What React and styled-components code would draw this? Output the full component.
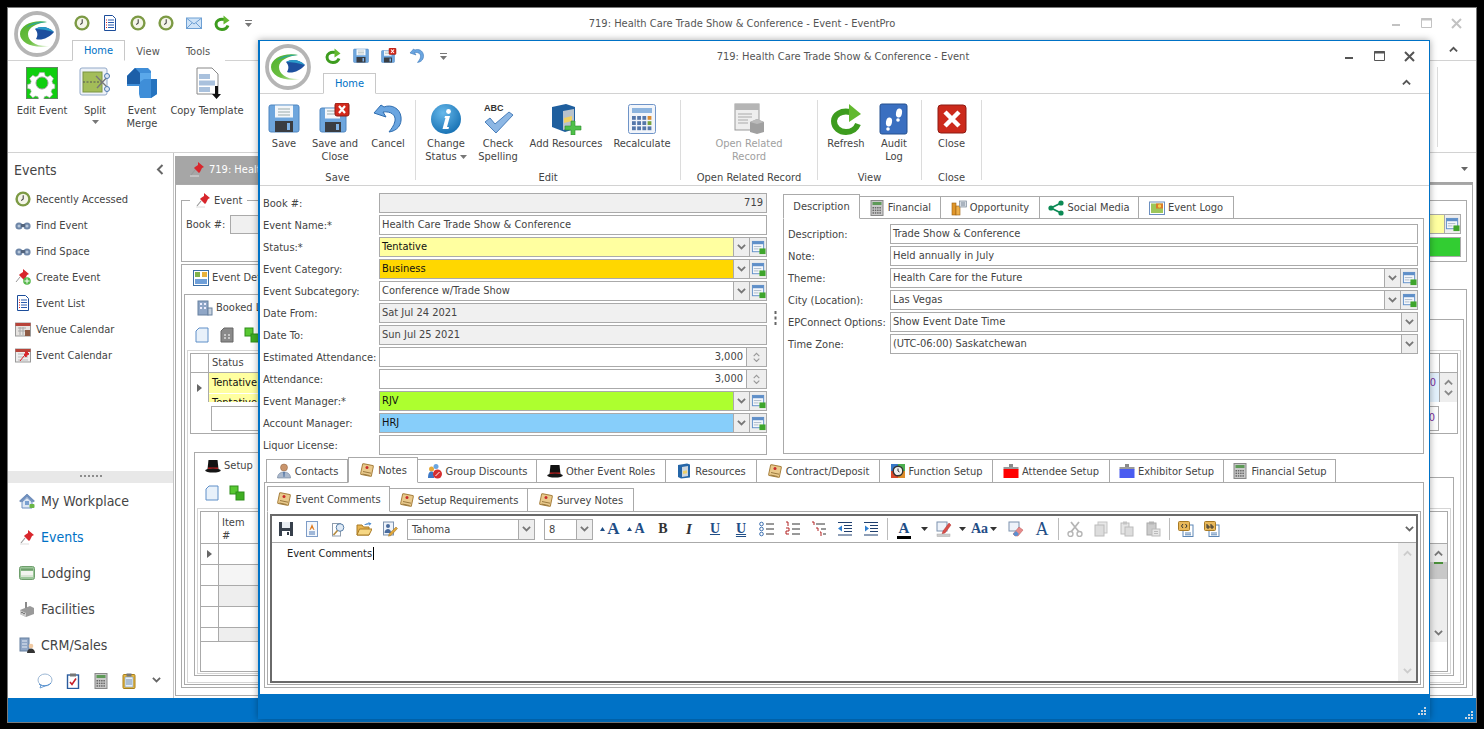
import React from 'react'
import styled, { createGlobalStyle } from 'styled-components'

const GlobalStyle = createGlobalStyle`
  html, body { margin: 0; padding: 0; background: #000; }
  * { box-sizing: border-box; }
  body {
    font-family: "DejaVu Sans Condensed", "DejaVu Sans", sans-serif;
    font-size: 11px;
    color: #444;
  }
`

const Glyph = styled.svg`
  display: block;
  flex-shrink: 0;
`
const icon = (vb, body) => ({ s = vb }) => (
  <Glyph width={s} height={s} viewBox={`0 0 ${vb} ${vb}`}>{body}</Glyph>
)

// ---------- icons ----------
const LogoMark = icon(46, <>
  <defs>
    <linearGradient id="logoG" x1="0" y1="0" x2="1" y2="1">
      <stop offset="0" stopColor="#4fb02c" />
      <stop offset=".6" stopColor="#6dc043" />
      <stop offset="1" stopColor="#d9efc9" />
    </linearGradient>
  </defs>
  <circle cx="23" cy="23" r="21" fill="#fff" stroke="#b5b5b5" strokeWidth="3.800" />
  <path d="M33 11C20 8 6 14 6 23c0 9 14 15 29 12-13 1-21-5-21-12 0-6 8-11 19-12z" fill="url(#logoG)" />
  <path d="M33 11c-9-1-17 1-21 6 4-3 12-5 21-6z" fill="#2aa59a" />
  <path d="M21 18c5-3 13-3 19 3-5 6-13 9-18 7 2-3 2-7-1-10z" fill="#1d4f9e" />
  <path d="M21 18c5-3 13-3 19 3-7-2-13-3-19-3z" fill="#2a9bc9" />
</>)
const Clock = icon(16, <>
  <circle cx="8" cy="8" r="7.600" fill="#7c9a44" />
  <circle cx="8" cy="8" r="5.200" fill="#f4f5e8" />
  <path d="M8.200 4.200V8L6.200 9.600" fill="none" stroke="#444" strokeWidth="1.100" />
</>)
const DocList = icon(16, <>
  <path d="M2.500.5h8l3 3v12h-11z" fill="#fff" stroke="#1c4d9a" />
  <path d="M4 5h1M4 7.500h1M4 10h1M4 12.500h1" stroke="#d22" />
  <path d="M6 5h6M6 7.500h6M6 10h6M6 12.500h6" stroke="#2a5db0" />
</>)
const Mail = icon(16, <>
  <rect x=".5" y="3" width="15" height="10.500" fill="#cfe3f7" stroke="#6d9fd3" />
  <path d="M1 3.500l7 5.500 7-5.500M1 13l5-5M15 13l-5-5" fill="none" stroke="#6d9fd3" />
</>)
const Refresh = icon(32, <>
  <path d="M20 9C11 7 4 12 4 18c0 7 6 11 12 11 6 0 10-3 12-8" fill="none" stroke="#3d9c1e" strokeWidth="6" />
  <path d="M19 1l12 10-12 8z" fill="#62b92f" />
</>)
const Save = icon(32, <>
  <rect x="1" y="2" width="30" height="27" rx="2" fill="#6ea6dd" stroke="#4f86c0" />
  <rect x="7" y="2.500" width="18" height="12" fill="#f4f7fa" />
  <path d="M10 6h12M10 9h12M10 12h12" stroke="#9aa" />
  <rect x="7" y="18" width="18" height="11" fill="#3a3d42" />
  <rect x="19" y="20" width="3" height="7" fill="#7fb2e5" />
</>)
const SaveClose = icon(32, <>
  <rect x="1" y="5" width="26" height="24" rx="2" fill="#6ea6dd" stroke="#4f86c0" />
  <rect x="6" y="5.500" width="15" height="10" fill="#f4f7fa" />
  <path d="M8 8h10M8 11h10" stroke="#9aa" />
  <rect x="6" y="19" width="16" height="10" fill="#3a3d42" />
  <rect x="17" y="21" width="3" height="6" fill="#7fb2e5" />
  <rect x="16" y="0" width="14" height="13" rx="2" fill="#d3291c" stroke="#8d1a12" />
  <path d="M20 3l6 7M26 3l-6 7" stroke="#fff" strokeWidth="2.200" />
</>)
const Undo = icon(32, <>
  <path d="M9 2L2 10l12 4-3-5c8-1 13 3 12 9-1 5-4 8-6 11 8-1 13-7 12-15C28 5 19 1 12 4z" fill="#6aa5e0" stroke="#2f6db0" />
</>)
const Info = icon(32, <>
  <defs><radialGradient id="infoG" cx=".4" cy=".3" r=".8"><stop offset="0" stopColor="#66b8ea" /><stop offset="1" stopColor="#0f6aae" /></radialGradient></defs>
  <circle cx="16" cy="16" r="15" fill="url(#infoG)" />
  <circle cx="18.500" cy="8.500" r="2.400" fill="#fff" />
  <path d="M15 13h5l-3 11h2l-.5 2h-6l3-11h-1z" fill="#fff" />
</>)
const Spell = icon(32, <>
  <text x="2" y="8" fontFamily="Liberation Sans, sans-serif" fontWeight="700" fontSize="9" fill="#333">ABC</text>
  <path d="M3 19l5-4 5 6L27 9l4 3-17 18z" fill="#8db7e4" stroke="#4a7fbb" />
</>)
const AddRes = icon(32, <>
  <path d="M2 4l14-3 9 3v22l-10 3-13-5z" fill="#1f5f9e" />
  <path d="M13 8l11-2v18l-11 3z" fill="#b9c3cc" />
  <path d="M14 15l8-2v5l-8 2z" fill="#f0d264" />
  <path d="M21 18h4v5h6v4h-6v5h-4v-5h-6v-4h6z" fill="#4fc04a" stroke="#2f8d2c" strokeWidth=".6" />
</>)
const Calc = icon(32, <>
  <rect x="2.500" y="1.500" width="27" height="29" rx="2" fill="#f2f5fa" stroke="#6f94c8" />
  <rect x="6" y="5" width="20" height="5" fill="#8db4de" />
  {[0, 1, 2, 3].map(c => [0, 1, 2].map(r => (
    <rect key={`${c}-${r}`} x={6 + c * 5.2} y={13 + r * 5.2} width="3.800" height="3.800" fill={c === 3 && r === 0 ? '#d98a30' : c === 3 && r === 1 ? '#77a23c' : '#5577aa'} />
  )))}
</>)
const Related = icon(32, <>
  <rect x="2" y="1" width="24" height="26" fill="#eee" stroke="#999" />
  <rect x="2" y="1" width="24" height="6" fill="#b5b5b5" />
  <path d="M5 11h14M5 14h14M5 17h10M5 20h10" stroke="#aaa" />
  <path d="M17 19l7-3 7 3v10l-7 2-7-2z" fill="#a0a0a0" />
  <path d="M17 19l7 2 7-2-7-3z" fill="#bbb" />
</>)
const Audit = icon(32, <>
  <rect x="2" y="1" width="27" height="30" rx="2" fill="#3a6fc0" stroke="#24508f" />
  <ellipse cx="11" cy="19" rx="3" ry="4.500" fill="#fff" transform="rotate(10 11 19)" />
  <circle cx="10" cy="26" r="1.800" fill="#fff" />
  <ellipse cx="21" cy="10" rx="3" ry="4.500" fill="#fff" transform="rotate(10 21 10)" />
  <circle cx="20" cy="17" r="1.800" fill="#fff" />
</>)
const CloseBig = icon(32, <>
  <rect x="2" y="2" width="28" height="28" rx="3" fill="#cc2a1c" stroke="#8d1a12" />
  <path d="M9 9l14 14M23 9L9 23" stroke="#fff" strokeWidth="4.500" />
</>)
const Gear = icon(32, <>
  <rect x=".5" y=".5" width="31" height="31" fill="#0fce0f" stroke="#5f8a5f" />
  <path d="M13 3h6l1 4 3 1.300 3.500-2 4 4-2 3.500 1 3 2.500 1v5l-3.500 1-1 3 2 3.500-4 4-3.500-2-3 1-1 3.500h-6l-1-3.500-3-1-3.500 2-4-4 2-3.500-1-3-3.500-1v-5l3.500-1 1-3-2-3.500 4-4 3.500 2 3-1.300z" transform="translate(3.200 3.200) scale(.8)" fill="#fff" stroke="#aaa" strokeWidth=".8" />
  <circle cx="16" cy="16" r="6" fill="#0fce0f" stroke="#999" />
</>)
const SplitIco = icon(32, <>
  <rect x="1" y="1" width="27" height="27" rx="2" fill="#eef2f8" stroke="#93a9c8" />
  <rect x="4" y="5" width="19" height="20" fill="#a3bd58" stroke="#7a9440" />
  <path d="M4 15h20" stroke="#555" strokeDasharray="2 1.500" />
  <path d="M17 9l11 11M30 8L18 21" stroke="#777" strokeWidth="1.400" />
  <circle cx="28" cy="22" r="2.500" fill="#dfe7f2" stroke="#4d79b0" />
  <circle cx="28" cy="9" r="2.500" fill="#dfe7f2" stroke="#4d79b0" />
</>)
const Merge = icon(32, <>
  <path d="M9 1h13l3 3v8h6v15l-6 4H14l-1-4v-8H1V9z" fill="#3f8ed8" />
  <path d="M9 1l5 5v11H1V9z" fill="#1d5fa8" />
  <path d="M14 6h11v6h-7l-4 3z" fill="#5aa8ea" />
  <path d="M25 12h6v15l-6 4z" fill="#2573bf" />
</>)
const CopyTpl = icon(32, <>
  <path d="M6 1h15l6 6v20H6z" fill="#fff" stroke="#888" />
  <rect x="8" y="7" width="11" height="5" fill="#a9c1dd" />
  <rect x="8" y="13.500" width="16" height="5" fill="#a9c1dd" />
  <rect x="8" y="20" width="11" height="5" fill="#a9c1dd" />
  <path d="M24 19v8h-3l4.500 5 4.500-5h-3v-8z" fill="#111" />
</>)
const Pin = icon(16, <>
  <path d="M9 1l6 5-2 1-2 4-1 1-5-5 1-1 3-2z" fill="#d8262c" />
  <path d="M6 9l-4 5" stroke="#999" strokeWidth="1.200" />
  <path d="M1 15h9" stroke="#ddd" />
</>)
const Binoculars = icon(16, <>
  <circle cx="4" cy="9" r="3.600" fill="#6f87a8" />
  <circle cx="12" cy="9" r="3.600" fill="#6f87a8" />
  <rect x="6" y="7" width="4" height="3" fill="#54657d" />
  <circle cx="4" cy="9" r="1.500" fill="#b6c6da" />
  <circle cx="12" cy="9" r="1.500" fill="#b6c6da" />
</>)
const CreatePin = icon(16, <>
  <path d="M8 0l6 5-2 1-2 4-1 1-5-5 1-1 3-2z" fill="#d8262c" />
  <path d="M5 8l-4 5" stroke="#999" />
  <circle cx="12" cy="12" r="3.800" fill="#55b84a" />
  <path d="M12 9.500v5M9.500 12h5" stroke="#fff" />
</>)
const VenueCal = icon(16, <>
  <rect x=".5" y="2" width="15" height="13" fill="#e6e3e0" stroke="#999" />
  <rect x=".5" y="2" width="15" height="3" fill="#b8443a" />
  <path d="M3 7h8M3 10h8M5 6v8M8 6v8" stroke="#aaa" />
  <rect x="10" y="9" width="5" height="6" fill="#8d5a44" />
</>)
const EventCal = icon(16, <>
  <rect x=".5" y="2" width="15" height="13" fill="#eee" stroke="#999" />
  <rect x=".5" y="2" width="15" height="3" fill="#b8443a" />
  <path d="M3 7h10M3 10h10M3 13h10" stroke="#bbb" />
  <path d="M11 4l3 3-2 1-1 2-2-2 1-1zM9 9l-4 5" fill="#d8262c" stroke="#d8262c" />
</>)
const Home = icon(16, <>
  <path d="M8 1L.5 8l1.500 1L8 3.500 14 9l1.500-1z" fill="#6d8fc0" stroke="#4a6c9e" strokeWidth=".5" />
  <path d="M3 9v6h10V9L8 4.500z" fill="#dfe8f4" stroke="#6d8fc0" />
  <rect x="6" y="8" width="4" height="4" fill="#7aa0d0" />
  <rect x="10.500" y="11" width="5" height="4" rx="1" fill="#69b545" />
</>)
const Lodging = icon(16, <>
  <rect x=".5" y="1.500" width="15" height="13" rx="2" fill="#9cc79a" stroke="#6f9f6d" />
  <rect x="2" y="6" width="12" height="4" fill="#f2f5ef" />
  <rect x="2" y="3.500" width="12" height="2" fill="#6f9f6d" />
  <rect x="2" y="10" width="12" height="2" fill="#d9e6d5" />
</>)
const Facilities = icon(16, <>
  <path d="M1 9l10-4 4 2v6l-8 3-6-3z" fill="#9a9a9a" />
  <path d="M1 9l6 3v4l-6-3z" fill="#cfcfcf" />
  <rect x="6" y="1" width="2" height="6" fill="#8a8a8a" />
  <circle cx="3" cy="11.500" r=".7" fill="#444" />
  <circle cx="5" cy="12.500" r=".7" fill="#444" />
</>)
const Crm = icon(16, <>
  <rect x="1" y="1" width="9" height="13" fill="#8fa6c6" stroke="#67809f" />
  <path d="M3 4h5M3 7h5M3 10h5" stroke="#e5ecf5" />
  <circle cx="12" cy="9" r="2.300" fill="#f0c9a2" />
  <path d="M8 16c0-3 2-4.500 4-4.500s4 1.500 4 4.500z" fill="#333" />
</>)
const Bubble = icon(16, <>
  <ellipse cx="8" cy="7" rx="7" ry="6" fill="#fff" stroke="#9db8d5" />
  <path d="M4 12l-1 3 5-2" fill="#fff" stroke="#6fa0d5" />
  <path d="M2 11c2 2 8 3 12-1" fill="none" stroke="#4b8bcf" />
</>)
const ClipCheck = icon(16, <>
  <rect x="2.500" y="2" width="11" height="13.500" fill="#fff" stroke="#2b5c9e" strokeWidth="1.400" />
  <rect x="5" y=".5" width="6" height="3" fill="#777" />
  <path d="M5 9l2 2.500 4-6" fill="none" stroke="#c6202a" strokeWidth="1.600" />
</>)
const GreyCalc = icon(16, <>
  <rect x="2" y=".5" width="12" height="15" fill="#c9c9c9" stroke="#888" />
  <rect x="3.500" y="2" width="9" height="3" fill="#5e9a58" />
  {[0, 1, 2, 3].map(c => [0, 1, 2].map(r => (
    <rect key={`${c}-${r}`} x={3.5 + c * 2.3} y={7 + r * 2.6} width="1.500" height="1.500" fill="#666" />
  )))}
</>)
const ClipYellow = icon(16, <>
  <rect x="2" y="1.500" width="12" height="14" rx="1" fill="#eab93f" stroke="#a67f1f" />
  <rect x="4" y="4" width="8" height="10" fill="#e6eef7" stroke="#5c86b5" strokeWidth=".5" />
  <rect x="5.500" y=".5" width="5" height="3" fill="#777" />
  <path d="M5 7h6M5 9h6M5 11h6" stroke="#6e8db0" />
</>)
const Contact = icon(16, <>
  <circle cx="8" cy="4.500" r="3.500" fill="#c9946b" stroke="#8a5e3c" strokeWidth=".5" />
  <path d="M1.500 15c0-4 3-6 6.500-6s6.500 2 6.500 6z" fill="#aab8cc" stroke="#6d7f99" strokeWidth=".6" />
  <path d="M7 9h2l-.5 5h-1z" fill="#5b7ca8" />
</>)
const Note = icon(16, <>
  <rect x="2.500" y="2.500" width="11" height="11" rx="1" transform="rotate(12 8 8)" fill="#e9c98b" stroke="#a67f3d" />
  <path d="M4 9.500l8 1.700M3.500 12l7 1.500" stroke="#9b7a3f" />
  <circle cx="8" cy="5.500" r="1.500" fill="#c92a2a" />
</>)
const GroupDisc = icon(16, <>
  <circle cx="4.500" cy="6" r="2.500" fill="#e5a93a" />
  <path d="M1 15c0-5 1.500-6.500 3.500-6.500S7 10 7 15z" fill="#3d78c6" />
  <circle cx="9" cy="3.500" r="2.500" fill="#6aa5e0" />
  <circle cx="10.500" cy="11" r="4.500" fill="#d62f2f" />
  <path d="M8.500 13l4-4" stroke="#fff" />
</>)
const Hat = icon(16, <>
  <path d="M3.500 2h9l1 9h-11z" fill="#111" />
  <rect x="3" y="9.500" width="10" height="2" fill="#c01f1f" />
  <ellipse cx="8" cy="12.500" rx="7.800" ry="2" fill="#151515" />
</>)
const ResIco = icon(16, <>
  <path d="M2 2l9-1.500 3 1v13L5 15.500 2 14z" fill="#2566a8" />
  <path d="M6 4l6-1v10l-6 1z" fill="#cdd6de" />
  <path d="M7 8l4-.7v3l-4 .7z" fill="#ecd06a" />
</>)
const FuncIco = icon(16, <>
  <rect x="1" y="1" width="7" height="7" fill="#3778c8" />
  <rect x="8" y="1" width="7" height="7" fill="#4caf50" />
  <rect x="1" y="8" width="7" height="7" fill="#d9482b" />
  <rect x="8" y="8" width="7" height="7" fill="#e08d2a" />
  <circle cx="8" cy="8" r="4.800" fill="#eee" stroke="#333" strokeWidth="1.400" />
  <path d="M8 5.500V8l1.500 1" fill="none" stroke="#333" />
</>)
const Badge = ({ color }) => (
  <Glyph width="16" height="16" viewBox="0 0 16 16">
    <rect x="6" y="1" width="4" height="5" fill="#8a8a8a" />
    <rect x=".5" y="4" width="15" height="2.500" fill="#999" />
    <rect x=".5" y="6" width="15" height="9" fill={color} />
  </Glyph>
)
const Coins = icon(16, <>
  <rect x="1" y="3" width="4" height="12" fill="#e0962a" stroke="#9a6013" strokeWidth=".6" />
  <rect x="5" y="6" width="4" height="9" fill="#eeb04a" stroke="#9a6013" strokeWidth=".6" />
  <rect x="8.500" y="1" width="7" height="6" fill="#d7dde4" stroke="#7d8a99" strokeWidth=".7" />
  <path d="M10 3h4M10 5h4" stroke="#7d8a99" />
</>)
const Share = icon(16, <>
  <path d="M13 3L3 8l10 5" fill="none" stroke="#0c8a55" strokeWidth="1.800" />
  <circle cx="13" cy="3" r="2.600" fill="#0c8a55" />
  <circle cx="3" cy="8" r="2.600" fill="#0c8a55" />
  <circle cx="13" cy="13" r="2.600" fill="#0c8a55" />
</>)
const Picture = icon(16, <>
  <rect x=".5" y="2" width="15" height="12.500" fill="#fff" stroke="#6c8fc0" />
  <rect x="2" y="3.500" width="12" height="9.500" fill="#9dc65a" />
  <rect x="7" y="3.500" width="7" height="5" fill="#d97a2b" />
  <circle cx="10.500" cy="6" r="1.700" fill="#f5d24b" />
</>)
const Lookup = icon(16, <>
  <rect x="1.500" y="1.500" width="12" height="11" fill="#f4f7fb" stroke="#5f8fc8" />
  <rect x="1.500" y="1.500" width="12" height="3" fill="#5f8fc8" />
  <path d="M3 7h8M3 9.500h5" stroke="#aab8c8" />
  <rect x="9" y="9" width="6.500" height="6" fill="#3fa52c" />
</>)
const DarkSave = icon(16, <>
  <rect x="1" y="1" width="14" height="14" fill="#37404c" />
  <rect x="4" y="1" width="8" height="6" fill="#e8edf2" />
  <rect x="4" y="10" width="8" height="5" fill="#fff" />
  <rect x="9" y="11" width="2" height="3" fill="#37404c" />
</>)
const DocA = icon(16, <>
  <rect x="2.500" y=".5" width="11" height="15" fill="#f3f7fc" stroke="#7d9cc7" />
  <path d="M8 3l-2.500 6h1l.6-1.500h1.800L9.500 9h1z" fill="#e07b1f" />
  <path d="M5 11h6M5 13h6" stroke="#4c78b5" />
</>)
const FindDoc = icon(16, <>
  <rect x="2.500" y="2.500" width="8" height="12.500" fill="#fff" stroke="#8e9cad" />
  <circle cx="10" cy="6.500" r="3.800" fill="#dfeaf6" stroke="#567da6" />
  <path d="M7.500 9.500l-4 4.500" stroke="#b38a3e" strokeWidth="1.600" />
</>)
const Folder = icon(16, <>
  <path d="M1 4h5l1.500 2H13v8H1z" fill="#e8b450" stroke="#a87a24" />
  <path d="M1 14l2.500-6H16l-3 6z" fill="#f6d784" stroke="#a87a24" />
  <path d="M8 4c2-2 4-2 5-1.500L12 1l3.500 1.500L13 5l.5-1.500C11.500 3.500 10 4 8 4z" fill="#4b8bcf" />
</>)
const EditPen = icon(16, <>
  <rect x="1.500" y="1" width="10" height="13" fill="#eef3fa" stroke="#7d92ae" />
  <circle cx="6" cy="5" r="2" fill="#4a6c9e" />
  <path d="M2.500 12c0-3 2-4 3.500-4s3 1 3 4z" fill="#4a6c9e" />
  <path d="M14 6l1.500 1.500L9 14.500l-2.500.7.700-2.500z" fill="#e0a63a" stroke="#9a6f1c" strokeWidth=".5" />
</>)
const ListLines = icon(16, <>
  <circle cx="2.500" cy="3" r="1.800" fill="#fff" stroke="#3c6fb0" />
  <circle cx="2.500" cy="8" r="1.800" fill="#fff" stroke="#3c6fb0" />
  <circle cx="2.500" cy="13" r="1.800" fill="#fff" stroke="#3c6fb0" />
  <path d="M7 3h8M7 8h8M7 13h8" stroke="#333" />
</>)
const NumLines = icon(16, <>
  <path d="M1 1h2v4M1 7h3v3H1v3h3" fill="none" stroke="#b22222" />
  <path d="M7 3h8M7 8h8M7 13h8" stroke="#333" />
</>)
const MultiLines = icon(16, <>
  <path d="M1 1h2v3M5 7h2v3M9 11h1v4" fill="none" stroke="#b22222" />
  <path d="M5 3h9M10 8h5M12 13h3" stroke="#333" />
</>)
const Outdent = icon(16, <>
  <path d="M1 1.500h14M7 4.500h8M7 7.500h8M7 10.500h8M1 14h14" stroke="#1f3f6e" />
  <path d="M1 7.500l4-3v6z" fill="#2f7fd1" />
</>)
const Indent = icon(16, <>
  <path d="M1 1.500h14M7 4.500h8M7 7.500h8M7 10.500h8M1 14h14" stroke="#1f3f6e" />
  <path d="M6 7.500l-4-3v6z" fill="#2f7fd1" />
</>)
const Highlight = icon(16, <>
  <rect x="1" y="1" width="10" height="9" fill="#eef3fa" stroke="#7d92ae" />
  <path d="M13 2l2 2-6 8-3 1 1-3z" fill="#d8504a" stroke="#a22" strokeWidth=".4" />
  <rect x="1" y="13" width="13" height="2.500" fill="#ccc" stroke="#aaa" strokeWidth=".5" />
</>)
const Eraser = icon(16, <>
  <rect x="1" y="1" width="10" height="9" fill="#eef3fa" stroke="#7d92ae" />
  <path d="M5 13l6-7 4 3-5 6H7z" fill="#e78b8b" stroke="#b55" strokeWidth=".5" />
  <path d="M5 13l3-3 3 3-2 2H7z" fill="#5b8fd0" />
</>)
const Cut = icon(16, <>
  <path d="M4 1l8 10M12 1L4 11" stroke="#b5b5b5" strokeWidth="1.800" />
  <circle cx="3.500" cy="13" r="2.500" fill="#fff" stroke="#b5b5b5" strokeWidth="1.400" />
  <circle cx="12.500" cy="13" r="2.500" fill="#fff" stroke="#b5b5b5" strokeWidth="1.400" />
</>)
const CopyG = icon(16, <>
  <rect x="5" y="1" width="9" height="11" fill="#e8e8e8" stroke="#c5c5c5" />
  <rect x="2" y="4" width="9" height="11" fill="#ddd" stroke="#bbb" />
</>)
const PasteG = icon(16, <>
  <rect x="2" y="2" width="8" height="11" fill="#e6e6e6" stroke="#bbb" />
  <rect x="4" y=".5" width="4" height="3" fill="#c4c4c4" />
  <rect x="6" y="6" width="8" height="9" fill="#ddd" stroke="#bbb" />
</>)
const PasteS = icon(16, <>
  <rect x="2" y="2" width="9" height="12" fill="#ccc" stroke="#aaa" />
  <rect x="4" y=".5" width="5" height="3" fill="#b5b5b5" />
  <rect x="7" y="8" width="8" height="7" fill="#e6e6e6" stroke="#bbb" />
  <path d="M9 10.500h4M9 12.500h4" stroke="#bbb" />
</>)
const CodeDoc = ({ mark }) => (
  <Glyph width="16" height="16" viewBox="0 0 16 16">
    <rect x="5" y="4" width="10" height="11.500" fill="#fff" stroke="#5c86b5" />
    <path d="M7 12h6M7 13.800h6" stroke="#5c86b5" />
    <rect x=".5" y=".5" width="11" height="9" rx="1" fill="#e8b85a" stroke="#a87a24" />
    {mark === 'code'
      ? <path d="M5 3L3.500 5 5 7M7.500 3L9 5 7.500 7" fill="none" stroke="#333" />
      : <path d="M3 3v4M3 5h2v2H3M7 3v4h2V5H7" fill="none" stroke="#333" />}
  </Glyph>
)
const Event16 = icon(16, <>
  <rect x=".5" y=".5" width="15" height="15" fill="#fff" stroke="#3b6ea5" />
  <rect x="2" y="2" width="5" height="5" fill="#7fb24a" />
  <rect x="9" y="2" width="5" height="5" fill="#e8b23c" />
  <rect x="2" y="9" width="12" height="5" fill="#6f9fd8" />
</>)
const VenueBuild = icon(16, <>
  <rect x="1" y="1" width="10" height="14" fill="#8fa6c6" stroke="#67809f" />
  <rect x="3" y="3" width="2" height="2" fill="#eef" />
  <rect x="7" y="3" width="2" height="2" fill="#eef" />
  <rect x="3" y="7" width="2" height="2" fill="#eef" />
  <rect x="7" y="7" width="2" height="2" fill="#eef" />
  <rect x="11" y="8" width="4" height="7" fill="#c7d1dd" stroke="#67809f" />
</>)
const BlankDoc = icon(16, <path d="M5 1h9v14H2V4z" fill="#e8f1fa" stroke="#5f8fc8" />)
const GreyDoc = icon(16, <>
  <path d="M5 1h9v14H2V4z" fill="#8a8a8a" stroke="#666" />
  <path d="M5 8h2M9 8h2M5 11h2M9 11h2" stroke="#ddd" strokeWidth="1.500" />
</>)
const Cubes = icon(16, <>
  <rect x="1" y="1" width="8" height="8" fill="#58c832" stroke="#2f8d1a" />
  <rect x="7" y="7" width="8" height="8" fill="#3fae22" stroke="#2f8d1a" />
</>)
const Chev = ({ up, w = 10, color = '#666', sw = 2 }) => (
  <Glyph width={w} height={w * 0.7} viewBox="0 0 10 7">
    <path d={up ? 'M1 6l4-4 4 4' : 'M1 1l4 4 4-4'} fill="none" stroke={color} strokeWidth={sw} />
  </Glyph>
)
const ChevLeft = () => (
  <Glyph width="8" height="11" viewBox="0 0 8 11">
    <path d="M6.500 1L2 5.500 6.500 10" fill="none" stroke="#666" strokeWidth="2" />
  </Glyph>
)
const Caret = ({ color = '#777' }) => (
  <Glyph width="7" height="4" viewBox="0 0 7 4"><path d="M0 0h7L3.500 4z" fill={color} /></Glyph>
)
const TinyUp = () => (
  <Glyph width="5" height="4" viewBox="0 0 5 4"><path d="M2.500 0L5 4H0z" fill="#1f4e86" /></Glyph>
)
const QatCaret = () => (
  <Glyph width="7" height="7" viewBox="0 0 7 7">
    <path d="M0 0h7v1H0z" fill="#777" /><path d="M0 3h7L3.500 7z" fill="#777" />
  </Glyph>
)
const RowMark = () => (
  <Glyph width="5" height="8" viewBox="0 0 5 8"><path d="M0 0l5 4-5 4z" fill="#666" /></Glyph>
)
const Dots = () => (
  <Glyph width="3" height="14" viewBox="0 0 3 14">
    {[0, 5.5, 11].map(y => <rect key={y} x=".5" y={y} width="2" height="3" fill="#666" />)}
  </Glyph>
)
const SplitDots = () => (
  <Glyph width="24" height="2" viewBox="0 0 24 2">
    {[0, 1, 2, 3, 4, 5].map(i => <rect key={i} x={i * 4 + 1} y="0" width="2" height="2" fill="#8c8c8c" />)}
  </Glyph>
)
const Grip = () => (
  <Glyph width="9" height="9" viewBox="0 0 9 9">
    {[[7, 1], [4, 4], [7, 4], [1, 7], [4, 7], [7, 7]].map(([x, y]) => (
      <rect key={`${x}${y}`} x={x} y={y} width="2" height="2" fill="#c9d6e2" />
    ))}
  </Glyph>
)
const WinControls = ({ color }) => (
  <Controls>
    <Control>
      <Glyph width="10" height="10" viewBox="0 0 10 10"><path d="M1 7h8" stroke={color} strokeWidth="2" /></Glyph>
    </Control>
    <Control>
      <Glyph width="11" height="10" viewBox="0 0 11 10"><path d="M.500.500h10v9H.500z" fill="none" stroke={color} /><path d="M0 1.500h11" stroke={color} strokeWidth="2" /></Glyph>
    </Control>
    <Control>
      <Glyph width="11" height="11" viewBox="0 0 11 11"><path d="M1 1l9 9M10 1l-9 9" stroke={color} strokeWidth="2" /></Glyph>
    </Control>
  </Controls>
)

// ---------- page ----------
const Desktop = styled.div`
  position: relative;
  width: 1484px;
  height: 729px;
  padding: 7px 0 0 7px;
  background: #000;
  overflow: hidden;
`
const MainWindow = styled.div`
  width: 1470px;
  height: 716px;
  border: 1px solid #7a7a7a;
  background: #fff;
  display: flex;
  flex-direction: column;
`
const Header = styled.div`
  display: flex;
  flex-shrink: 0;
`
const LogoSlot = styled.div`
  width: ${p => p.$w}px;
  flex-shrink: 0;
  padding: 3px 0 0 ${p => p.$w - 58}px;
`
const HeaderMain = styled.div`
  flex: 1;
  display: flex;
  flex-direction: column;
`
const TitleRow = styled.div`
  display: grid;
  grid-template-columns: ${p => p.$cols};
  align-items: center;
  height: 30px;
`
const Quick = styled.div`
  display: flex;
  align-items: center;
  gap: 12px;
  padding-left: 2px;
`
const QuickCaret = styled.span`
  margin-left: 3px;
  display: flex;
`
const Title = styled.div`
  text-align: center;
  color: #555;
  white-space: nowrap;
`
const Controls = styled.div`
  display: flex;
  justify-content: flex-end;
  padding-right: 5px;
`
const Control = styled.div`
  width: 30px;
  display: flex;
  justify-content: center;
`
const TabRow = styled.div`
  display: flex;
  align-items: flex-end;
  height: 22px;
`
const RibbonTab = styled.div`
  height: ${p => (p.$active ? 21 : 20)}px;
  width: ${p => p.$w}px;
  text-align: center;
  line-height: 19px;
  color: ${p => (p.$active ? '#0072c6' : '#555')};
  background: #fff;
  border: 1px solid ${p => (p.$active ? '#c8c8c8' : 'transparent')};
  border-bottom: ${p => (p.$active ? '1px solid #fff' : 'none')};
  margin-bottom: -1px;
  position: relative;
`
const Collapse = styled.div`
  margin-left: auto;
  margin-right: ${p => p.$mr}px;
  align-self: center;
`
const Ribbon = styled.div`
  display: flex;
  height: 93px;
  flex-shrink: 0;
  border-top: 1px solid #d2d2d2;
  border-bottom: 1px solid #d2d2d2;
`
const MainRibbonRow = styled.div`
  flex: 1;
  display: flex;
  gap: ${p => p.$gap}px;
  padding: 6px 0 0 8px;
`
const RibbonSep = styled.div`
  width: 1px;
  height: 80px;
  background: #dcdcdc;
  margin: 0 38px 0 auto;
`
const RButton = styled.div`
  width: ${p => p.$w}px;
  display: flex;
  flex-direction: column;
  align-items: center;
  text-align: center;
  line-height: 13px;
  color: ${p => (p.$off ? '#a0a0a0' : '#444')};
  flex-shrink: 0;
`
const RLabel = styled.div`
  margin-top: ${p => p.$mt}px;
  white-space: pre;
`
const RCaret = styled.div`
  margin-top: 3px;
`
const InlineCaret = styled.span`
  display: inline-block;
  vertical-align: middle;
  margin-left: 3px;
`
const Group = styled.div`
  width: ${p => p.$w}px;
  flex-shrink: 0;
  display: flex;
  flex-direction: column;
  padding-top: 9px;
`
const GroupBody = styled.div`
  flex: 1;
  display: flex;
  justify-content: ${p => p.$justify || 'flex-start'};
  padding-left: ${p => p.$pl || 0}px;
  gap: ${p => p.$gap || 0}px;
`
const GroupName = styled.div`
  text-align: center;
  height: 14px;
  line-height: 14px;
`
const GroupSep = styled.div`
  width: 1px;
  height: 80px;
  margin-top: 6px;
  background: #dcdcdc;
  flex-shrink: 0;
`
const Body = styled.div`
  flex: 1;
  display: flex;
  min-height: 0;
`
const SidePanel = styled.div`
  width: 166px;
  flex-shrink: 0;
  border-right: 1px solid #c4c4c4;
  display: flex;
  flex-direction: column;
`
const SideHead = styled.div`
  height: 33px;
  display: flex;
  align-items: center;
  justify-content: space-between;
  padding: 0 9px 0 6px;
  font-size: 14px;
  color: #444;
`
const SideItem = styled.div`
  height: 26px;
  display: flex;
  align-items: center;
  gap: 5px;
  padding-left: 7px;
`
const SideSpacer = styled.div`
  flex: 1;
`
const Splitter = styled.div`
  height: 12px;
  background: #e8e8e8;
  display: flex;
  justify-content: center;
  padding-top: 4px;
`
const NavItem = styled.div`
  height: 36px;
  display: flex;
  align-items: center;
  gap: 6px;
  padding-left: 11px;
  font-size: 14px;
  color: ${p => (p.$active ? '#0072c6' : '#444')};
`
const NavFoot = styled.div`
  height: 35px;
  display: flex;
  align-items: center;
  padding-left: 29px;
  gap: 12px;
`
const DocArea = styled.div`
  flex: 1;
  min-width: 0;
  padding: 3px 3px 0 1px;
  display: flex;
  flex-direction: column;
  overflow: hidden;
`
const DocStrip = styled.div`
  height: 28px;
  display: flex;
  justify-content: space-between;
  align-items: center;
  border-bottom: 2px solid #a5a5a5;
  flex-shrink: 0;
  padding-right: 5px;
`
const DocTab = styled.div`
  align-self: stretch;
  width: 84px;
  overflow: hidden;
  white-space: nowrap;
  background: #a6a6a6;
  color: #fff;
  display: flex;
  align-items: center;
  gap: 4px;
  padding-left: 14px;
`
const Frame = styled.div`
  border: 1px solid ${p => p.$c || '#aaa'};
  height: ${p => p.$h}px;
  margin: ${p => p.$m || 0};
  padding: ${p => p.$p || 0};
  flex-shrink: 0;
  position: relative;
  display: flex;
  flex-direction: column;
`
const Legend = styled.div`
  position: absolute;
  top: -9px;
  left: 8px;
  padding: 0 5px;
  background: #fff;
  display: flex;
  gap: 3px;
  align-items: center;
`
const BookRow = styled.div`
  display: flex;
  align-items: center;
  height: 20px;
`
const BookLabel = styled.div`
  width: 44px;
  flex-shrink: 0;
`
const BookInput = styled.div`
  width: 300px;
  height: 19px;
  background: #f0f0f0;
  border: 1px solid #aaa;
`
const BackField = styled.div`
  height: 20px;
  margin-left: auto;
  width: 400px;
  display: flex;
  border: 1px solid #aaa;
  background: #ffffa0;
  justify-content: flex-end;
`
const BackLookup = styled.div`
  width: 16px;
  background: #eee;
  border-left: 1px solid #aaa;
  display: flex;
  align-items: center;
`
const GreenBar = styled.div`
  height: 20px;
  width: 400px;
  margin: 3px 0 0 auto;
  background: #32cd32;
  border: 1px solid #aaa;
`
const BackTab = styled.div`
  height: 26px;
  width: ${p => p.$w}px;
  display: flex;
  align-items: center;
  gap: 3px;
  padding-left: ${p => p.$pl}px;
  flex-shrink: 0;
  border: 1px solid #aaa;
  border-bottom: 0;
  background: #fff;
  color: #444;
  margin-bottom: -1px;
  position: relative;
  z-index: 1;
`
const BackStrip = styled.div`
  margin-left: ${p => p.$ml || 0}px;
  margin-top: ${p => p.$mt || 0}px;
`
const BackTools = styled.div`
  height: 30px;
  display: flex;
  align-items: center;
  gap: 9px;
  padding-left: 7px;
  flex-shrink: 0;
`
const GridBox = styled.div`
  border: 1px solid #aaa;
  height: ${p => p.$h}px;
  margin: 1px;
  display: flex;
  flex-direction: column;
  flex-shrink: 0;
`
const GridRow = styled.div`
  height: ${p => p.$h}px;
  display: flex;
  flex-shrink: 0;
  border-bottom: 1px solid ${p => p.$line || '#aaa'};
  background: ${p => p.$bg || '#fff'};
`
const MarkCell = styled.div`
  width: 18px;
  flex-shrink: 0;
  display: flex;
  align-items: center;
  justify-content: center;
  border-right: 1px solid #aaa;
  background: #fff;
`
const TextCell = styled.div`
  flex: 1;
  padding: ${p => p.$pt || 0}px 0 0 3px;
  background: ${p => p.$bg || 'transparent'};
  color: ${p => p.$c || '#444'};
  line-height: ${p => p.$lh || 20}px;
  white-space: pre-line;
  overflow: hidden;
`
const EndCell = styled.div`
  width: 18px;
  flex-shrink: 0;
  border-left: 1px solid #aaa;
  background: ${p => p.$bg || 'transparent'};
  display: flex;
  flex-direction: column;
  justify-content: ${p => (p.$spread ? 'space-between' : 'flex-start')};
  align-items: center;
  padding: ${p => (p.$spread ? '6px 0' : 0)};
  position: relative;
  overflow: hidden;
  height: ${p => (p.$h ? `${p.$h}px` : 'auto')};
  z-index: ${p => (p.$h ? 1 : 'auto')};
`
const RightValue = styled.div`
  flex: 1;
  text-align: right;
  padding-right: 3px;
  color: ${p => p.$c || '#444'};
  line-height: 20px;
  background: ${p => p.$bg || 'transparent'};
`
const Thumb = styled.div`
  height: 17px;
  width: 100%;
  margin-top: 6px;
  background: linear-gradient(to right, #c8c8c8 4px, #4a8f3a 4px, #4a8f3a 13px, #c8c8c8 13px) top / 100% 2px no-repeat, #c8c8c8;
`
const FooterBox = styled.div`
  border: 1px solid #aaa;
  height: 25px;
  margin: 3px 18px 0 20px;
  text-align: right;
  padding-right: 3px;
  line-height: 22px;
  color: #7a2fa0;
`
const StatusBar = styled.div`
  height: 24px;
  flex-shrink: 0;
  background: #0072c6;
  display: flex;
  justify-content: flex-end;
  align-items: flex-end;
  padding: 0 3px 3px 0;
`

// ---------- event dialog ----------
const Dialog = styled.div`
  position: absolute;
  z-index: 5;
  left: 258px;
  top: 40px;
  width: 1172px;
  height: 679px;
  background: #fff;
  border: 1px solid #0072c6;
  border-left-width: 2px;
  box-shadow: 0 0 7px rgba(0, 0, 0, 0.35);
  display: flex;
  flex-direction: column;
`
const FormArea = styled.div`
  display: flex;
  padding: 7px 0 0 3px;
  flex-shrink: 0;
`
const FormCol = styled.div`
  width: 504px;
  flex-shrink: 0;
`
const Row = styled.div`
  display: flex;
  height: 20px;
  margin-bottom: 2px;
  align-items: center;
`
const Label = styled.div`
  width: ${p => p.$w}px;
  flex-shrink: 0;
  white-space: nowrap;
`
const Field = styled.div`
  flex: 1;
  min-width: 0;
  height: 20px;
  display: flex;
  align-items: stretch;
  border: 1px solid #aaa;
  background: ${p => p.$bg || '#fff'};
`
const FieldText = styled.div`
  flex: 1;
  padding: 0 3px 0 2px;
  line-height: 18px;
  color: ${p => p.$c || '#444'};
  text-align: ${p => (p.$right ? 'right' : 'left')};
  white-space: nowrap;
`
const FieldBtn = styled.div`
  width: ${p => p.$w || 16}px;
  flex-shrink: 0;
  border-left: 1px solid #aaa;
  background: #eee;
  display: flex;
  flex-direction: column;
  gap: 1px;
  align-items: center;
  justify-content: center;
`
const VSplit = styled.div`
  width: 16px;
  flex-shrink: 0;
  display: flex;
  justify-content: center;
  padding-top: 118px;
`
const InfoCol = styled.div`
  width: 641px;
  flex-shrink: 0;
`
const TabStrip = styled.div`
  display: flex;
  align-items: flex-end;
  height: ${p => p.$h}px;
  padding-left: ${p => p.$pl || 0}px;
  position: relative;
  z-index: 1;
  flex-shrink: 0;
`
const Tab = styled.div`
  width: ${p => p.$w}px;
  height: ${p => (p.$active ? p.$h + 2 : p.$h)}px;
  flex-shrink: 0;
  display: flex;
  align-items: center;
  justify-content: center;
  gap: 3px;
  background: #fff;
  color: #444;
  border: 1px solid #aaa;
  border-left-width: ${p => (p.$first || p.$active ? 1 : 0)}px;
  border-bottom: 1px solid ${p => (p.$active ? '#fff' : '#aaa')};
  margin-bottom: -1px;
  white-space: nowrap;
`
const InfoPanel = styled.div`
  border: 1px solid #aaa;
  height: 236px;
  padding: 5px 5px 0 4px;
`
const Lower = styled.div`
  padding-left: 4px;
  margin-top: -1px;
  flex-shrink: 0;
`
const OuterFrame = styled.div`
  width: 1160px;
  height: 206px;
  border: 1px solid #aaa;
  padding-left: 2px;
`
const InnerFrame = styled.div`
  width: 1154px;
  height: 174px;
  border: 1px solid #aaa;
  padding: 2px;
`
const Editor = styled.div`
  height: 169px;
  border: 2px solid #6a6a6a;
  display: flex;
  flex-direction: column;
`
const Toolbar = styled.div`
  height: 27px;
  display: flex;
  align-items: center;
  border-bottom: 1px solid #aaa;
  padding-left: 1px;
  flex-shrink: 0;
`
const ToolCell = styled.div`
  width: ${p => p.$w || 26}px;
  margin-left: ${p => p.$ml || 0}px;
  flex-shrink: 0;
  display: flex;
  align-items: center;
  justify-content: center;
`
const ToolSep = styled.div`
  width: 1px;
  height: 22px;
  background: #bbb;
  margin: 0 3px;
  flex-shrink: 0;
`
const ToolLetter = styled.span`
  font-family: "Liberation Serif", serif;
  font-size: ${p => p.$size || 15}px;
  font-weight: ${p => (p.$plain ? 400 : 700)};
  font-style: ${p => (p.$italic ? 'italic' : 'normal')};
  color: ${p => p.$c || '#1f4e86'};
  line-height: 16px;
  text-decoration: ${p => (p.$under ? 'underline' : 'none')};
  text-decoration-style: ${p => (p.$under === 'double' ? 'double' : 'solid')};
  border-bottom: ${p => (p.$bar ? '3px solid #000' : '0')};
  padding: 0 2px;
`
const Select = styled.div`
  width: ${p => p.$w}px;
  height: 21px;
  margin-left: ${p => p.$ml}px;
  flex-shrink: 0;
  display: flex;
  border: 1px solid #aaa;
  line-height: 19px;
  padding-left: 4px;
  justify-content: space-between;
`
const SelectBtn = styled.div`
  width: 16px;
  background: #eee;
  border-left: 1px solid #aaa;
  display: flex;
  align-items: center;
  justify-content: center;
`
const ToolEnd = styled.div`
  margin-left: auto;
  margin-right: 2px;
`
const EditorBody = styled.div`
  flex: 1;
  display: flex;
  min-height: 0;
`
const EditorText = styled.div`
  flex: 1;
  padding: 4px 0 0 15px;
  color: #222;
`
const Cursor = styled.span`
  border-right: 1px solid #000;
  padding-right: 1px;
`
const EditorScroll = styled.div`
  width: 18px;
  background: #eee;
  display: flex;
  flex-direction: column;
  justify-content: space-between;
  align-items: center;
  padding: 7px 0;
`
const DialogFoot = styled.div`
  margin-top: auto;
`

const Btn = ({ w, label, I, mt = 5, off, caret, inline }) => (
  <RButton $w={w} $off={off}>
    {I}
    <RLabel $mt={mt}>{label}{inline && <InlineCaret><Caret /></InlineCaret>}</RLabel>
    {caret && <RCaret><Caret /></RCaret>}
  </RButton>
)

const sideItems = [
  ['Recently Accessed', <Clock />],
  ['Find Event', <Binoculars />],
  ['Find Space', <Binoculars />],
  ['Create Event', <CreatePin />],
  ['Event List', <DocList />],
  ['Venue Calendar', <VenueCal />],
  ['Event Calendar', <EventCal />],
]
const navItems = [
  ['My Workplace', <Home />],
  ['Events', <Pin />, true],
  ['Lodging', <Lodging />],
  ['Facilities', <Facilities />],
  ['CRM/Sales', <Crm />],
]
const leftRows = [
  { label: 'Book #:', value: '719', bg: '#f0f0f0', right: true },
  { label: 'Event Name:*', value: 'Health Care Trade Show & Conference' },
  { label: 'Status:*', value: 'Tentative', bg: '#ffffa0', c: '#111', combo: true },
  { label: 'Event Category:', value: 'Business', bg: '#ffd700', c: '#111', combo: true },
  { label: 'Event Subcategory:', value: 'Conference w/Trade Show', combo: true },
  { label: 'Date From:', value: 'Sat Jul 24 2021', bg: '#f0f0f0' },
  { label: 'Date To:', value: 'Sun Jul 25 2021', bg: '#f0f0f0' },
  { label: 'Estimated Attendance:', value: '3,000', right: true, spin: true },
  { label: 'Attendance:', value: '3,000', right: true, spin: true },
  { label: 'Event Manager:*', value: 'RJV', bg: '#adff2f', c: '#111', combo: true },
  { label: 'Account Manager:', value: 'HRJ', bg: '#87cefa', c: '#111', combo: true },
  { label: 'Liquor License:', value: '' },
]
const rightRows = [
  { label: 'Description:', value: 'Trade Show & Conference' },
  { label: 'Note:', value: 'Held annually in July' },
  { label: 'Theme:', value: 'Health Care for the Future', combo: true },
  { label: 'City (Location):', value: 'Las Vegas', combo: true },
  { label: 'EPConnect Options:', value: 'Show Event Date Time', drop: true },
  { label: 'Time Zone:', value: '(UTC-06:00) Saskatchewan', drop: true },
]
const infoTabs = [
  ['Description', 77, null],
  ['Financial', 81, <GreyCalc />],
  ['Opportunity', 99, <Coins />],
  ['Social Media', 99, <Share />],
  ['Event Logo', 95, <Picture />],
]
const lowerTabs = [
  ['Contacts', 82, <Contact />],
  ['Notes', 70, <Note />, true],
  ['Group Discounts', 119, <GroupDisc />],
  ['Other Event Roles', 129, <Hat />],
  ['Resources', 91, <ResIco />],
  ['Contract/Deposit', 123, <Note />],
  ['Function Setup', 113, <FuncIco />],
  ['Attendee Setup', 117, <Badge color="#f00" />],
  ['Exhibitor Setup', 114, <Badge color="#4a5cf0" />],
  ['Financial Setup', 112, <GreyCalc />],
]
const noteTabs = [
  ['Event Comments', 123, true],
  ['Setup Requirements', 138],
  ['Survey Notes', 106],
]

const FormRow = ({ r, w }) => (
  <Row>
    <Label $w={w}>{r.label}</Label>
    <Field $bg={r.bg}>
      <FieldText $c={r.c} $right={r.right}>{r.value}</FieldText>
      {(r.combo || r.drop) && <FieldBtn><Chev w={9} color="#777" /></FieldBtn>}
      {r.combo && <FieldBtn $w={17}><Lookup s={15} /></FieldBtn>}
      {r.spin && <FieldBtn $w={20}><Chev up w={7} color="#999" sw={1.6} /><Chev w={7} color="#999" sw={1.6} /></FieldBtn>}
    </Field>
  </Row>
)

const BackContent = () => (
  <DocArea>
    <DocStrip>
      <DocTab><Pin /> 719: Healt</DocTab>
      <Caret color="#666" />
    </DocStrip>
    <Frame $h={512} $p="15px 5px 0">
      <Frame $h={62} $p="13px 5px 0 4px">
        <Legend><Pin /> Event</Legend>
        <BookRow>
          <BookLabel>Book #:</BookLabel><BookInput />
          <BackField><BackLookup><Lookup s={15} /></BackLookup></BackField>
        </BookRow>
        <GreenBar />
      </Frame>
      <BackStrip $mt={2}>
        <BackTab $w={200} $pl={11}><Event16 /> Event Det</BackTab>
      </BackStrip>
      <Frame $h={399} $p="3px 2px 0">
        <BackStrip $mt={1}>
          <BackTab $w={200} $pl={12}><VenueBuild /> Booked L</BackTab>
        </BackStrip>
        <Frame $h={366} $p="0 2px">
          <BackTools><BlankDoc /><GreyDoc /><Cubes /></BackTools>
          <Frame $h={333} $c="#d5d5d5" $p="1px">
            <GridBox $h={81}>
              <GridRow $h={19}>
                <MarkCell />
                <TextCell $lh={18}>Status</TextCell>
                <EndCell />
              </GridRow>
              <GridRow $h={30} $line="#fff">
                <MarkCell><RowMark /></MarkCell>
                <TextCell $bg="linear-gradient(#ffffa0 20px, #fff 20px, #fff 21px, #ffffa0 21px)" $c="#111">{'Tentative\nTentative'}</TextCell>
                <RightValue $bg="#e3f1fc" $c="#7a2fa0">00</RightValue>
                <EndCell $spread $bg="#eee"><Chev up w={9} color="#888" /><Chev w={9} color="#888" /></EndCell>
              </GridRow>
              <FooterBox>00</FooterBox>
            </GridBox>
            <BackStrip $ml={5} $mt={17}>
              <BackTab $w={200} $pl={10}><Hat /> Setup</BackTab>
            </BackStrip>
            <Frame $h={199} $p="0 2px" $m="0 5px">
              <BackTools><BlankDoc /><Cubes /></BackTools>
              <Frame $h={166} $c="#d5d5d5" $p="1px">
                <GridBox $h={161}>
                  <GridRow $h={32}>
                    <MarkCell />
                    <TextCell $lh={13} $pt={4}>{'Item\n#'}</TextCell>
                    <EndCell />
                  </GridRow>
                  {['#fff', '#f5f5f5', '#eee', '#fff', '#eee'].map((bg, i) => (
                    <GridRow key={i} $h={i === 4 ? 14 : 21} $bg={bg}>
                      <MarkCell>{i === 0 && <RowMark />}</MarkCell>
                      <TextCell />
                      {i === 0 && (
                        <EndCell $spread $bg="#eee" $h={98}>
                          <Chev up w={9} color="#777" /><Thumb /><SideSpacer /><Chev w={9} color="#777" />
                        </EndCell>
                      )}
                    </GridRow>
                  ))}
                </GridBox>
              </Frame>
            </Frame>
          </Frame>
        </Frame>
      </Frame>
    </Frame>
  </DocArea>
)

const App = () => (
  <Desktop>
    <GlobalStyle />
    <MainWindow>
      <Header>
        <LogoSlot $w={64}><LogoMark s={46} /></LogoSlot>
        <HeaderMain>
          <TitleRow $cols="400px 540px 1fr">
            <Quick>
              <Clock /><DocList /><Clock /><Clock /><Mail /><Refresh s={16} />
              <QuickCaret><QatCaret /></QuickCaret>
            </Quick>
            <Title>719: Health Care Trade Show &amp; Conference - Event - EventPro</Title>
            <WinControls color="#c2c2c2" />
          </TitleRow>
          <TabRow>
            <RibbonTab $active $w={53}>Home</RibbonTab>
            <RibbonTab $w={46}>View</RibbonTab>
            <RibbonTab $w={54}>Tools</RibbonTab>
            <Collapse $mr={18}><Chev up w={9} color="#555" /></Collapse>
          </TabRow>
        </HeaderMain>
      </Header>
      <Ribbon>
        <MainRibbonRow $gap={7}>
          <Btn w={52} label="Edit Event" I={<Gear />} />
          <Btn w={40} label="Split" I={<SplitIco />} caret />
          <Btn w={40} label={'Event\nMerge'} I={<Merge />} />
          <Btn w={76} label="Copy Template" I={<CopyTpl />} />
          <RibbonSep />
        </MainRibbonRow>
      </Ribbon>
      <Body>
        <SidePanel>
          <SideHead>Events <ChevLeft /></SideHead>
          {sideItems.map(([t, ic]) => <SideItem key={t}>{ic}{t}</SideItem>)}
          <SideSpacer />
          <Splitter><SplitDots /></Splitter>
          {navItems.map(([t, ic, active]) => <NavItem key={t} $active={active}>{ic}{t}</NavItem>)}
          <NavFoot>
            <Bubble /><ClipCheck /><GreyCalc /><ClipYellow />
            <ToolCell $w={14}><Chev w={9} color="#666" /></ToolCell>
          </NavFoot>
        </SidePanel>
        <BackContent />
      </Body>
      <StatusBar><Grip /></StatusBar>
    </MainWindow>

    <Dialog>
      <Header>
        <LogoSlot $w={63}><LogoMark s={46} /></LogoSlot>
        <HeaderMain>
          <TitleRow $cols="300px 440px 1fr">
            <Quick>
              <Refresh s={16} /><Save s={16} /><SaveClose s={16} /><Undo s={16} />
              <QuickCaret><QatCaret /></QuickCaret>
            </Quick>
            <Title>719: Health Care Trade Show &amp; Conference - Event</Title>
            <WinControls color="#555" />
          </TitleRow>
          <TabRow>
            <RibbonTab $active $w={53}>Home</RibbonTab>
            <Collapse $mr={18}><Chev up w={9} color="#555" /></Collapse>
          </TabRow>
        </HeaderMain>
      </Header>
      <Ribbon>
        <Group $w={155}>
          <GroupBody $pl={6}>
            <Btn w={36} mt={2} label="Save" I={<Save />} />
            <Btn w={66} mt={2} label={'Save and\nClose'} I={<SaveClose />} />
            <Btn w={40} mt={2} label="Cancel" I={<Undo />} />
          </GroupBody>
          <GroupName>Save</GroupName>
        </Group>
        <GroupSep />
        <Group $w={264}>
          <GroupBody $pl={4}>
            <Btn w={52} mt={2} label={'Change\nStatus'} I={<Info />} inline />
            <Btn w={52} mt={2} label={'Check\nSpelling'} I={<Spell />} />
            <Btn w={84} mt={2} label="Add Resources" I={<AddRes />} />
            <Btn w={68} mt={2} label="Recalculate" I={<Calc />} />
          </GroupBody>
          <GroupName>Edit</GroupName>
        </Group>
        <GroupSep />
        <Group $w={136}>
          <GroupBody>
            <Btn w={136} mt={2} off label={'Open Related\nRecord'} I={<Related />} />
          </GroupBody>
          <GroupName>Open Related Record</GroupName>
        </Group>
        <GroupSep />
        <Group $w={103}>
          <GroupBody $pl={8} $gap={8}>
            <Btn w={40} mt={2} label="Refresh" I={<Refresh />} />
            <Btn w={40} mt={2} label={'Audit\nLog'} I={<Audit />} />
          </GroupBody>
          <GroupName>View</GroupName>
        </Group>
        <GroupSep />
        <Group $w={59}>
          <GroupBody $justify="center">
            <Btn w={50} mt={2} label="Close" I={<CloseBig />} />
          </GroupBody>
          <GroupName>Close</GroupName>
        </Group>
        <GroupSep />
      </Ribbon>
      <FormArea>
        <FormCol>
          {leftRows.map(r => <FormRow key={r.label} r={r} w={116} />)}
        </FormCol>
        <VSplit><Dots /></VSplit>
        <InfoCol>
          <TabStrip $h={25}>
            {infoTabs.map(([t, w, ic], i) => (
              <Tab key={t} $w={w} $h={23} $first={i === 0} $active={i === 0}>{ic}{t}</Tab>
            ))}
          </TabStrip>
          <InfoPanel>
            {rightRows.map(r => <FormRow key={r.label} r={r} w={102} />)}
          </InfoPanel>
        </InfoCol>
      </FormArea>
      <Lower>
        <TabStrip $h={26} $pl={2}>
          {lowerTabs.map(([t, w, ic, active], i) => (
            <Tab key={t} $w={w} $h={24} $first={i === 0} $active={active}>{ic}{t}</Tab>
          ))}
        </TabStrip>
        <OuterFrame>
          <TabStrip $h={28}>
            {noteTabs.map(([t, w, active], i) => (
              <Tab key={t} $w={w} $h={24} $first={i === 0} $active={active}><Note />{t}</Tab>
            ))}
          </TabStrip>
          <InnerFrame>
            <Editor>
              <Toolbar>
                <ToolCell><DarkSave /></ToolCell>
                <ToolCell><DocA /></ToolCell>
                <ToolCell><FindDoc /></ToolCell>
                <ToolCell><Folder /></ToolCell>
                <ToolCell><EditPen /></ToolCell>
                <Select $w={128} $ml={4}>Tahoma<SelectBtn><Chev w={9} color="#777" /></SelectBtn></Select>
                <Select $w={49} $ml={9}>8<SelectBtn><Chev w={9} color="#777" /></SelectBtn></Select>
                <ToolCell $ml={5}><TinyUp /><ToolLetter $size={17}>A</ToolLetter></ToolCell>
                <ToolCell><TinyUp /><ToolLetter $size={14}>A</ToolLetter></ToolCell>
                <ToolCell><ToolLetter $c="#333" $size={14}>B</ToolLetter></ToolCell>
                <ToolCell><ToolLetter $c="#333" $size={15} $italic>I</ToolLetter></ToolCell>
                <ToolCell><ToolLetter $size={14} $under="solid">U</ToolLetter></ToolCell>
                <ToolCell><ToolLetter $size={14} $under="double">U</ToolLetter></ToolCell>
                <ToolCell><ListLines /></ToolCell>
                <ToolCell><NumLines /></ToolCell>
                <ToolCell><MultiLines /></ToolCell>
                <ToolCell><Outdent /></ToolCell>
                <ToolCell><Indent /></ToolCell>
                <ToolSep />
                <ToolCell><ToolLetter $size={15} $bar>A</ToolLetter></ToolCell>
                <ToolCell $w={14}><Caret color="#333" /></ToolCell>
                <ToolCell><Highlight /></ToolCell>
                <ToolCell $w={10}><Caret color="#333" /></ToolCell>
                <ToolCell $ml={3}><ToolLetter $size={14}>Aa</ToolLetter><Caret color="#333" /></ToolCell>
                <ToolCell $ml={7}><Eraser /></ToolCell>
                <ToolCell><ToolLetter $size={18} $plain>A</ToolLetter></ToolCell>
                <ToolSep />
                <ToolCell><Cut /></ToolCell>
                <ToolCell><CopyG /></ToolCell>
                <ToolCell><PasteG /></ToolCell>
                <ToolCell><PasteS /></ToolCell>
                <ToolSep />
                <ToolCell><CodeDoc mark="code" /></ToolCell>
                <ToolCell><CodeDoc mark="ab" /></ToolCell>
                <ToolEnd><Chev w={9} color="#666" /></ToolEnd>
              </Toolbar>
              <EditorBody>
                <EditorText><Cursor>Event Comments</Cursor></EditorText>
                <EditorScroll><Chev up w={9} color="#ccc" /><Chev w={9} color="#ccc" /></EditorScroll>
              </EditorBody>
            </Editor>
          </InnerFrame>
        </OuterFrame>
      </Lower>
      <DialogFoot><StatusBar><Grip /></StatusBar></DialogFoot>
    </Dialog>
  </Desktop>
)

export default App
